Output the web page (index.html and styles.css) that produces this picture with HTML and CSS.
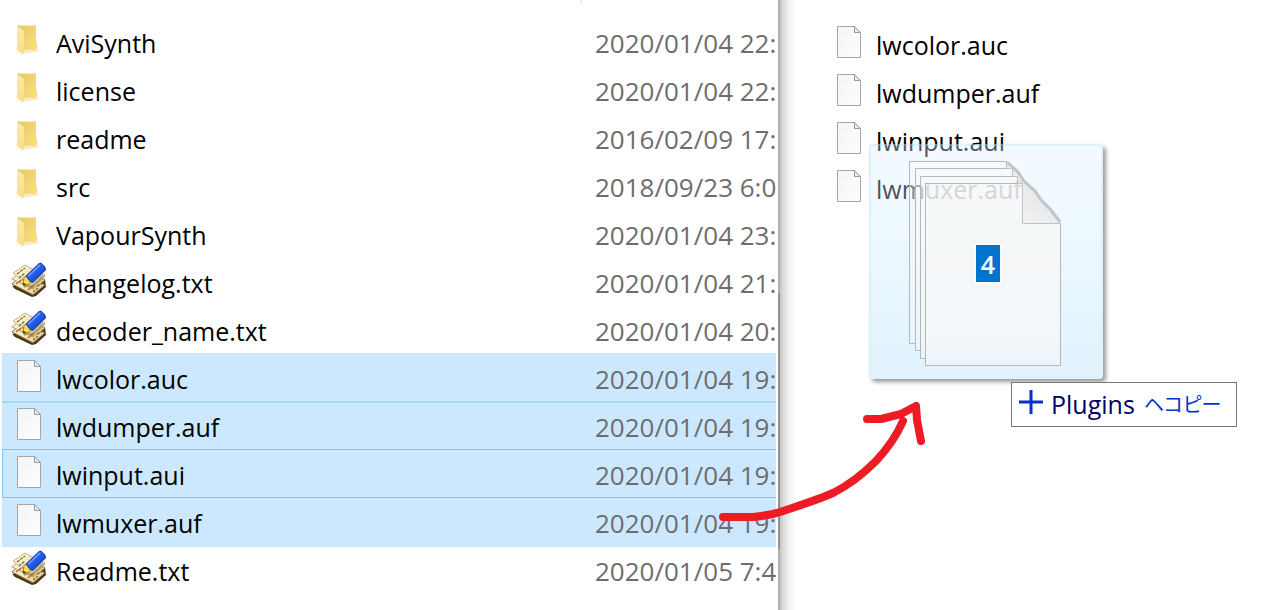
FILE: index.html
```
<!DOCTYPE html>
<html lang="ja">
<head>
<meta charset="utf-8">
<title>Plugins へコピー</title>
<link rel="stylesheet" href="styles.css">
</head>
<body>
<svg class="defs" aria-hidden="true">
  <defs>
    <linearGradient id="g-back" x1="0" y1="0" x2="1" y2="1"><stop offset="0" stop-color="#e8c765"/><stop offset="1" stop-color="#fbdf83"/></linearGradient>
    <linearGradient id="g-flap" x1="0" y1="0" x2="0" y2="1"><stop offset="0" stop-color="#ffeaa8"/><stop offset="1" stop-color="#fbdc85"/></linearGradient>
    <linearGradient id="g-paper" x1="0" y1="0" x2="1" y2="1"><stop offset="0" stop-color="#f3f5f5"/><stop offset="1" stop-color="#fdfdfd"/></linearGradient>
    <linearGradient id="g-pen" x1="0" y1="0" x2="1" y2="1"><stop offset="0" stop-color="#4f8cff"/><stop offset=".5" stop-color="#1f5cf0"/><stop offset="1" stop-color="#0b2fa8"/></linearGradient>
    <linearGradient id="g-sheet" x1="0" y1="0" x2="1" y2="1"><stop offset="0" stop-color="#fffbe8"/><stop offset="1" stop-color="#e3c98c"/></linearGradient>
    <symbol id="folder" viewBox="0 0 36 36">
      <path d="M7 29.5l20-1 1 .5-16 3z" fill="#efeadb"/>
      <path d="M6 3.500h19v15l1 2v8H13l-7-1z" fill="url(#g-back)"/>
      <path d="M6 4l7 5v22l-1 1.500-6-4.500z" fill="url(#g-flap)"/>
    </symbol>
    <symbol id="file" viewBox="0 0 36 36">
      <path d="M6.500 2.500h17l6 6v25h-23z" fill="url(#g-paper)" stroke="#a3a5a7"/>
      <path d="M23.500 2.500v6h6z" fill="#e6e8e9" stroke="#9a9c9e"/>
    </symbol>
    <symbol id="memo" viewBox="0 0 36 36">
      <path d="M1 24l3 3 17 8 4-1 10-9-1-8z" fill="#4a3818"/>
      <path d="M1 22l12-11 21 12-12 10z" fill="url(#g-sheet)" stroke="#6d5424" stroke-width=".8"/>
      <path d="M1 17l12-10 21 11-12 9z" fill="url(#g-sheet)" stroke="#967b43" stroke-width=".7"/>
      <path d="M2 11L14 3l18 10-12 12z" fill="url(#g-sheet)" stroke="#b39c66" stroke-width=".7"/>
      <path d="M6 12l8-6M8 16l6-5M13 25l5-4M17 28l5-4M22 30l5-4M8 20l4-3M26 24l5-2M5 22l4-3" stroke="#806226" stroke-width="1.200" stroke-dasharray="3 1" fill="none"/>
      <path d="M13 24c7 0 11-2 15-7l6-6v4L22 26z" fill="#806532" opacity=".5"/>
      <path d="M12 23l1-8 3-1 5 5-2 3z" fill="#ffd95a" stroke="#8b6b13" stroke-width=".7"/>
      <path d="M12 23.500l.4-3 2.500 2z" fill="#222"/>
      <path d="M15 14L28 1.500l2-.5 4 4 .5 3L22 20.500l-3-1z" fill="url(#g-pen)" stroke="#0a2379" stroke-width=".8"/>
      <path d="M17.500 14L29 3" stroke="#6f9fff" stroke-width="1.500"/>
    </symbol>
  </defs>
</svg>
<main class="desktop">
  <section class="source" aria-label="Source folder">
    <i class="header-tick"></i>
    <table class="files">
      <colgroup><col><col class="date-col"></colgroup>
      <tbody>
        <tr><td><span class="name"><svg class="icon"><use href="#folder"/></svg>AviSynth</span></td><td class="date">2020/01/04 22:</td></tr>
        <tr><td><span class="name"><svg class="icon"><use href="#folder"/></svg>license</span></td><td class="date">2020/01/04 22:</td></tr>
        <tr><td><span class="name"><svg class="icon"><use href="#folder"/></svg>readme</span></td><td class="date">2016/02/09 17:</td></tr>
        <tr><td><span class="name"><svg class="icon"><use href="#folder"/></svg>src</span></td><td class="date">2018/09/23 6:0</td></tr>
        <tr><td><span class="name"><svg class="icon"><use href="#folder"/></svg>VapourSynth</span></td><td class="date">2020/01/04 23:</td></tr>
        <tr><td><span class="name"><svg class="icon"><use href="#memo"/></svg>changelog.txt</span></td><td class="date">2020/01/04 21:</td></tr>
        <tr><td><span class="name"><svg class="icon"><use href="#memo"/></svg>decoder_name.txt</span></td><td class="date">2020/01/04 20:</td></tr>
        <tr class="selected"><td><span class="name"><svg class="icon"><use href="#file"/></svg>lwcolor.auc</span></td><td class="date">2020/01/04 19:</td></tr>
        <tr class="selected ruled"><td><span class="name"><svg class="icon"><use href="#file"/></svg>lwdumper.auf</span></td><td class="date">2020/01/04 19:</td></tr>
        <tr class="selected focused"><td><span class="name"><svg class="icon"><use href="#file"/></svg>lwinput.aui</span></td><td class="date">2020/01/04 19:</td></tr>
        <tr class="selected last"><td><span class="name"><svg class="icon"><use href="#file"/></svg>lwmuxer.auf</span></td><td class="date">2020/01/04 19:</td></tr>
        <tr><td><span class="name"><svg class="icon"><use href="#memo"/></svg>Readme.txt</span></td><td class="date">2020/01/05 7:4</td></tr>
      </tbody>
    </table>
  </section>
  <section class="target" aria-label="Plugins">
    <ul class="dropped">
      <li class="name"><svg class="icon"><use href="#file"/></svg>lwcolor.auc</li>
      <li class="name"><svg class="icon"><use href="#file"/></svg>lwdumper.auf</li>
      <li class="name"><svg class="icon"><use href="#file"/></svg>lwinput.aui</li>
      <li class="name"><svg class="icon"><use href="#file"/></svg>lwmuxer.auf</li>
    </ul>
    <div class="ghost">
      <svg class="papers" viewBox="0 0 234 236">
        <defs><linearGradient id="g-curl" x1="0" y1="1" x2="1" y2="0"><stop offset="0" stop-color="#f4f4f4"/><stop offset="1" stop-color="#d5d6d7"/></linearGradient></defs>
        <g fill="#f7f7f7" fill-opacity=".3">
          <path d="M40 17h98l53 60v122H40z"/>
          <path d="M46 24h98l47 55v127H46z"/>
          <path d="M51 32h98l42 47v135H51z"/>
          <path d="M56 39h98l37 40v142H56z" fill-opacity=".4"/>
        </g>
        <g fill="none" stroke="#b4b8ba">
          <path d="M137.500 17.500h-97v182h5"/>
          <path d="M143.500 24.500h-97v182h5"/>
          <path d="M148.500 32.500h-97v182h5"/>
          <path d="M153.500 39.500h-97v182h135v-142"/>
        </g>
        <path d="M137.500 17.500v7h6v8h5v7h5v40h38l-5-8-3-1-2-5-4-2-3-6-4-2-3-6-5-4-3-5-5-4-3-5-5-4z" fill="url(#g-curl)" fill-opacity=".75" stroke="#bfc1c3"/>
        <path d="M138 18l11 10 6 9 11 10 7 10 9 9 9 12" fill="none" stroke="#c3c5c7" stroke-width="3"/>
      </svg>
      <span class="count">4</span>
    </div>
    <div class="tip" role="tooltip">
      <svg class="plus" viewBox="0 0 24 24"><path d="M0 12h24M12 0v24" stroke="#0033cc" stroke-width="3"/></svg>
      <span class="dest">Plugins</span><span class="verb">ヘコピー</span>
    </div>
    <svg class="arrow" viewBox="0 0 210 124" aria-hidden="true">
      <path d="M10 119H40C50 118 62 116 70 113C88 107 104 102 120 95C134 88 148 78 163 63C176 49 184 37 190 23M154 21H168L188 16 203 8 204 22 208 43"/>
    </svg>
  </section>
</main>
</body>
</html>
```
FILE: styles.css
```
* { box-sizing: border-box; }

body {
  margin: 0;
  background: #fff;
  color: #000;
  font-family: "Open Sans", "Noto Sans", "Noto Sans CJK JP", sans-serif;
  font-size: 25px;
  line-height: 36px;
}

.defs { position: absolute; width: 0; height: 0; }

.desktop {
  display: grid;
  grid-template-columns: 778fr 491fr;
  min-height: 100vh;
  overflow: hidden;
}

.source { position: relative; padding: 17px 2px; min-width: 0; }

.header-tick {
  position: absolute;
  top: 0;
  right: 196px;
  width: 1px;
  height: 3px;
  background: #ddd;
}

.files { width: 100%; table-layout: fixed; border-collapse: collapse; }
.files tr { height: 48px; }
.files td { padding: 0; white-space: nowrap; overflow: hidden; }
.date-col { width: 181px; }
.files .date { padding-top: 4px; color: #6d6d6d; font-size: 26px; }

.selected { background: #cce8ff; }
.selected.ruled { box-shadow: inset 0 2px #a6d6ff; }
.selected.focused { box-shadow: inset 1px 1px #7fc4fb; }
.selected.last { box-shadow: inset 0 1px #7fc4fb, 0 2px #cce8ff; }

.name {
  display: flex;
  align-items: center;
  gap: 9px;
  height: 48px;
  padding: 4px 0 0 9px;
}
.icon { flex: none; width: 36px; height: 36px; margin-bottom: 6px; }

.target {
  position: relative;
  padding: 19px 0 0 53px;
  background:
    linear-gradient(to bottom, transparent 48%, #939393 48% 90%, transparent 90%) 0 0 / 2px 100% no-repeat,
    linear-gradient(to right, #b2b2b2 0 2px, #d0d0d0 3px, #e2e2e2 7px, #f5f5f5 12px, #fff 20px);
}

.dropped { margin: 0; padding: 0; list-style: none; }
.dropped .name { padding-left: 0; }

.ghost {
  position: absolute;
  left: 91px;
  top: 144px;
  width: 234px;
  height: 235px;
  border: 2px solid rgba(190, 230, 250, .5);
  border-radius: 4px;
  background: linear-gradient(rgba(220, 243, 255, .35), rgba(200, 234, 255, .35) 45%, rgba(190, 228, 252, .4) 75%, rgba(182, 224, 248, .4));
  background-clip: padding-box;
  box-shadow: 3px 3px 4px rgba(0, 0, 0, .4);
}

.papers { display: block; width: 234px; height: 236px; margin: -2px; }

.count {
  position: absolute;
  left: 104px;
  top: 98px;
  width: 26px;
  height: 39px;
  border: 1px solid #fff;
  background: #0073cf;
  color: #fff;
  font-weight: 600;
  line-height: 38px;
  text-align: center;
}

.tip {
  position: absolute;
  left: 233px;
  top: 382px;
  display: flex;
  align-items: center;
  width: 226px;
  height: 45px;
  padding: 0 0 2px 7px;
  border: 1px solid #767676;
  background: #fff;
  white-space: nowrap;
}

.plus { width: 24px; height: 24px; margin: 0 8px 4px 0; }
.dest { color: #006; }
.verb {
  margin-left: 9px;
  color: #03c;
  font-family: "Noto Sans CJK JP", sans-serif;
  font-size: 20px;
  font-feature-settings: "palt";
}

.arrow {
  position: absolute;
  left: -65px;
  top: 398px;
  width: 210px;
  height: 124px;
  overflow: visible;
  fill: none;
  stroke: #ed1c24;
  stroke-width: 8;
  stroke-linecap: round;
  stroke-linejoin: round;
}
```
